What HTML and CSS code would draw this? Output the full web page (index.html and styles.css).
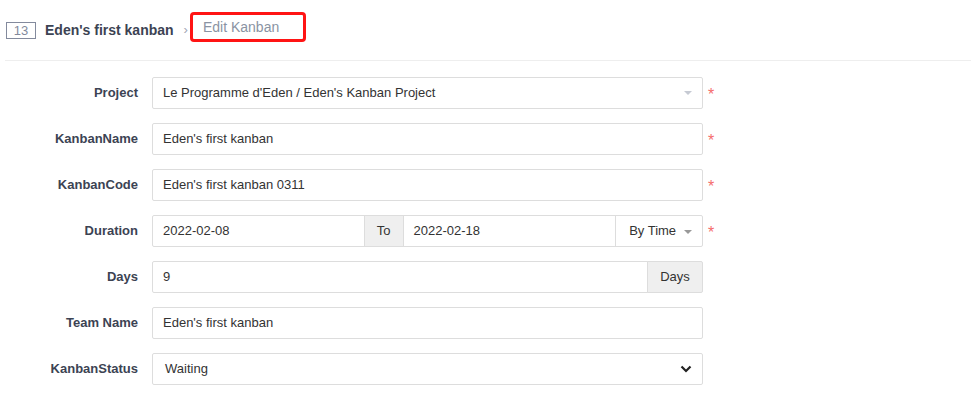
FILE: index.html
```html
<!DOCTYPE html>
<html lang="en">
<head>
  <meta charset="UTF-8">
  <title>Edit Kanban</title>
  <link rel="stylesheet" href="styles.css">
</head>
<body>

<!-- Encabezado -->
<div class="header">
  <span class="kanban-id">13</span>
  <span class="kanban-title">Eden's first kanban</span>
  <span class="crumb-sep">&rsaquo;</span>
  <span class="crumb-current">Edit Kanban</span>
</div>

<!-- Formulario -->
<div class="form">
  <div class="row">
    <label class="label">Project</label>
    <div class="field select">
      <span>Le Programme d'Eden / Eden's Kanban Project</span>
      <span class="caret"></span>
    </div>
    <span class="required">*</span>
  </div>

  <div class="row">
    <label class="label">KanbanName</label>
    <div class="field">Eden's first kanban</div>
    <span class="required">*</span>
  </div>

  <div class="row">
    <label class="label">KanbanCode</label>
    <div class="field">Eden's first kanban 0311</div>
    <span class="required">*</span>
  </div>

  <div class="row">
    <label class="label">Duration</label>
    <div class="group">
      <div class="part date">2022-02-08</div>
      <div class="part addon to">To</div>
      <div class="part date end">2022-02-18</div>
      <div class="part mode">By Time <span class="caret dark"></span></div>
    </div>
    <span class="required">*</span>
  </div>

  <div class="row">
    <label class="label">Days</label>
    <div class="group">
      <div class="part days">9</div>
      <div class="part addon unit">Days</div>
    </div>
  </div>

  <div class="row">
    <label class="label">Team Name</label>
    <div class="field">Eden's first kanban</div>
  </div>

  <div class="row">
    <label class="label">KanbanStatus</label>
    <div class="field select status">
      <span>Waiting</span>
      <svg class="chevron" width="12" height="8" viewBox="0 0 12 8">
        <path d="M1.5 1.5 L6 6 L10.5 1.5" fill="none" stroke="#222" stroke-width="2.2"/>
      </svg>
    </div>
  </div>
</div>

</body>
</html>
```

FILE: styles.css
```css
/* Estilos generales */
body {
  font-family: "Liberation Sans", Arial, sans-serif;
  font-size: 13px;
  color: #333;
  background: #fff;
  margin: 0;
  padding: 0;
}

/* Encabezado */
.header {
  display: flex;
  align-items: center;
  height: 60px;
  margin-left: 5px;
  padding-left: 1px;
  border-bottom: 1px solid #eee;
}
.kanban-id {
  display: inline-block;
  width: 28px;
  height: 15px;
  line-height: 15px;
  border: 1px solid #838a9d;
  color: #838a9d;
  font-size: 13px;
  text-align: center;
  margin-top: 1px;
}
.kanban-title {
  margin-left: 9px;
  font-size: 14px;
  font-weight: bold;
  color: #3c4353;
}
.crumb-sep {
  margin-left: 10px;
  margin-top: -2px;
  color: #a0a6b4;
  font-size: 13px;
}
.crumb-current {
  box-sizing: border-box;
  height: 30px;
  line-height: 24px;
  margin-left: 2px;
  margin-top: -6px;
  padding: 0 10px;
  width: 116px;
  border: 3px solid #ff1414;
  border-radius: 4px;
  color: #8a93a3;
  font-size: 14px;
}

/* Formulario */
.form {
  margin-top: 16px;
}
.row {
  display: flex;
  align-items: center;
  height: 32px;
  margin-bottom: 14px;
}
.label {
  width: 138px;
  margin-right: 14px;
  margin-top: -1px;
  text-align: right;
  font-weight: bold;
  color: #3c4353;
}
.field {
  box-sizing: border-box;
  width: 551px;
  height: 32px;
  line-height: 30px;
  padding: 0 10px;
  border: 1px solid #ddd;
  border-radius: 2px;
}
.select {
  display: flex;
  justify-content: space-between;
  align-items: center;
}
.caret {
  display: inline-block;
  width: 0;
  height: 0;
  border-left: 4px solid transparent;
  border-right: 4px solid transparent;
  border-top: 4px solid #c6cad3;
}
.caret.dark {
  border-top-color: #999;
  margin-left: 4px;
  vertical-align: middle;
}
.status {
  padding-left: 12px;
  padding-right: 10px;
}
.chevron {
  display: block;
}
.required {
  margin-left: 5px;
  color: #f56c6c;
  font-size: 16px;
  line-height: 16px;
  padding-top: 3px;
}

/* Grupos de entrada */
.group {
  display: flex;
  width: 551px;
  height: 32px;
}
.part {
  box-sizing: border-box;
  height: 32px;
  line-height: 30px;
  padding: 0 10px;
  border: 1px solid #ddd;
  margin-left: -1px;
}
.part:first-child {
  margin-left: 0;
  border-radius: 2px 0 0 2px;
}
.part:last-child {
  border-radius: 0 2px 2px 0;
}
.date {
  width: 213px;
}
.date.end {
  width: 214px;
}
.addon {
  background: #efefef;
  text-align: center;
  padding: 0;
}
.to {
  width: 40px;
}
.mode {
  width: 88px;
  padding: 0 0 0 13px;
}
.days {
  width: 497px;
}
.unit {
  width: 56px;
}
```
